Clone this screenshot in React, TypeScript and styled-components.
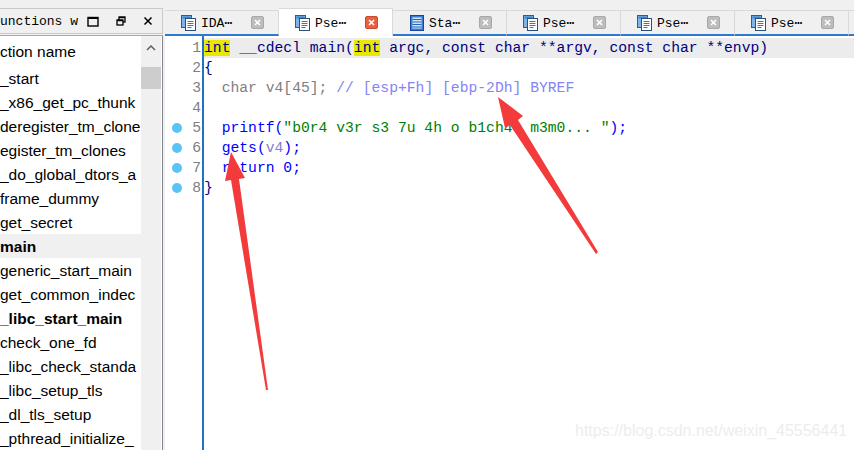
import React from 'react';
import styled, { createGlobalStyle } from 'styled-components';

const GlobalStyle = createGlobalStyle`
  html, body {
    margin: 0;
    padding: 0;
    background: #f0f0f0;
    overflow: hidden;
  }
  #root {
    width: 854px;
    height: 450px;
  }
`;

const Root = styled.div`
  position: relative;
  display: flex;
  width: 854px;
  height: 450px;
  background: #f0f0f0;
  overflow: hidden;
`;

const LeftPanel = styled.div`
  width: 163px;
  display: flex;
  flex-direction: column;
  padding-top: 8px;
  box-sizing: border-box;
`;

const TitleBar = styled.div`
  height: 27px;
  display: flex;
  align-items: center;
  border: 1px solid #c9c9c9;
  border-left: none;
  box-sizing: border-box;
  font: 13px 'Liberation Mono', monospace;
  color: #000;
`;

const TitleText = styled.div`
  width: 80px;
  white-space: nowrap;
  overflow: hidden;
`;

const TitleIcon = styled.div`
  width: 28px;
  display: flex;
  justify-content: center;
  align-items: center;
`;

const ListPanel = styled.div`
  flex: 1;
  display: flex;
  margin-top: 1px;
  border-top: 1px solid #a8a8a8;
  border-right: 1px solid #828790;
  background: #fff;
`;

const List = styled.div`
  width: 141px;
  overflow: hidden;
  font: 15.5px 'Liberation Sans', Arial, sans-serif;
  color: #000;
`;

const HeaderRow = styled.div`
  height: 30px;
  line-height: 31px;
  white-space: nowrap;
`;

const Row = styled.div<{ $bold?: boolean; $sel?: boolean }>`
  height: 24px;
  line-height: 25px;
  white-space: nowrap;
  font-weight: ${(p) => (p.$bold ? 700 : 400)};
  background: ${(p) => (p.$sel ? '#f0f0f0' : 'transparent')};
`;

const Scrollbar = styled.div`
  width: 20px;
  background: #f0f0f0;
  display: flex;
  flex-direction: column;
`;

const ScrollArrow = styled.div`
  height: 24px;
  display: flex;
  align-items: center;
  justify-content: center;
`;

const Thumb = styled.div`
  margin-top: 7px;
  height: 22px;
  background: #cdcdcd;
`;

const RightPanel = styled.div`
  flex: 1;
  margin-left: 2px;
  display: flex;
  flex-direction: column;
  padding-top: 8px;
  min-width: 0;
`;

const TabStrip = styled.div`
  height: 28px;
  display: flex;
  align-items: flex-end;
`;

const Tab = styled.div<{ $active?: boolean }>`
  flex: 0 0 114px;
  height: ${(p) => (p.$active ? '28px' : '26px')};
  box-sizing: border-box;
  display: flex;
  align-items: center;
  padding-left: 16px;
  gap: 4px;
  background: ${(p) => (p.$active ? '#fff' : '#f0f0f0')};
  border: 1px solid #d9d9d9;
  border-left: none;
  border-bottom: ${(p) => (p.$active ? 'none' : '2px solid #2b7ad0')};
  font: 13px 'Liberation Mono', 'DejaVu Sans Mono', monospace;
  color: #000;
`;

const TabLabel = styled.span`
  width: 46px;
  white-space: nowrap;
`;

const CloseBtn = styled.div<{ $active?: boolean }>`
  width: 13px;
  height: 13px;
  border-radius: 2px;
  box-sizing: border-box;
  border: 1px solid ${(p) => (p.$active ? '#c84a30' : '#a8a8a8')};
  background: ${(p) => (p.$active ? '#e8603f' : '#bdbdbd')};
  display: flex;
  align-items: center;
  justify-content: center;
`;

const Editor = styled.div`
  flex: 1;
  display: flex;
  background: #fff;
  font: 14.7px 'Liberation Mono', monospace;
`;

const Gutter = styled.div`
  width: 37px;
  padding-top: 2px;
  display: flex;
  flex-direction: column;
`;

const GutterLine = styled.div`
  height: 20px;
  display: grid;
  grid-template-columns: 24px 1fr;
  align-items: center;
  color: #808080;
`;

const Dot = styled.div`
  justify-self: center;
  width: 10px;
  height: 10px;
  border-radius: 50%;
  background: #5ac4f6;
`;

const LineNo = styled.span`
  text-align: right;
  padding-right: 1px;
`;

const Code = styled.div`
  flex: 1;
  padding-top: 2px;
  border-left: 2px solid #1f72c6;
`;

const CodeLine = styled.div<{ $current?: boolean }>`
  height: 20px;
  line-height: 20px;
  white-space: pre;
  color: #000080;
  background: ${(p) => (p.$current ? '#ececec' : 'transparent')};
`;

const Tok = styled.span<{ $c?: string; $hl?: boolean }>`
  color: ${(p) => p.$c || 'inherit'};
  background: ${(p) => (p.$hl ? '#e8e800' : 'transparent')};
`;

const Overlay = styled.svg`
  position: absolute;
  left: 0;
  top: 0;
  pointer-events: none;
`;

const Watermark = styled.div`
  position: absolute;
  left: 575px;
  top: 422px;
  font: 16px 'Liberation Sans', Arial, sans-serif;
  color: #ededed;
  white-space: nowrap;
`;

const names: { n: string; b?: boolean; s?: boolean }[] = [
  { n: '_start' },
  { n: '_x86_get_pc_thunk' },
  { n: 'deregister_tm_clone' },
  { n: 'egister_tm_clones' },
  { n: '_do_global_dtors_a' },
  { n: 'frame_dummy' },
  { n: 'get_secret' },
  { n: 'main', b: true, s: true },
  { n: 'generic_start_main' },
  { n: 'get_common_indec' },
  { n: '_libc_start_main', b: true },
  { n: 'check_one_fd' },
  { n: '_libc_check_standa' },
  { n: '_libc_setup_tls' },
  { n: '_dl_tls_setup' },
  { n: '_pthread_initialize_' },
];

const tabs = [
  { label: 'IDA', kind: 'doc' },
  { label: 'Pse', kind: 'doc', active: true },
  { label: 'Sta', kind: 'list' },
  { label: 'Pse', kind: 'doc' },
  { label: 'Pse', kind: 'doc' },
  { label: 'Pse', kind: 'doc' },
];

const DocIcon = () => (
  <svg width="16" height="16" viewBox="0 0 16 16">
    <rect x="0.5" y="0.5" width="10" height="12" fill="#7fb4ea" stroke="#1b5fb0" />
    <rect x="1.5" y="1.5" width="8" height="2" fill="#3b86d8" />
    <rect x="4.5" y="3.5" width="10" height="12" fill="#fff" stroke="#2a4f7a" />
    <path d="M6.5 6.5h6M6.5 8.5h6M6.5 10.5h6M6.5 12.5h4" stroke="#5a6f86" />
  </svg>
);

const ListIcon = () => (
  <svg width="16" height="16" viewBox="0 0 16 16">
    <rect x="1.5" y="0.5" width="13" height="15" fill="#3a7fd5" stroke="#17479a" />
    <rect x="3.5" y="2.5" width="9" height="11" fill="#cfe3fb" />
    <path d="M3.5 4.5h9M3.5 7h9M3.5 9.5h9M3.5 12h9" stroke="#2a63b8" />
  </svg>
);

const CloseX = () => (
  <svg width="7" height="7" viewBox="0 0 7 7">
    <path d="M1 1l5 5M6 1l-5 5" stroke="#fff" strokeWidth="1.6" />
  </svg>
);

const App: React.FC = () => {
  return (
    <>
      <GlobalStyle />
      <Root>
        <LeftPanel>
          <TitleBar>
            <TitleText>unctions w</TitleText>
            <TitleIcon>
              <svg width="12" height="11" viewBox="0 0 12 11">
                <rect x="1" y="1.5" width="10" height="8.5" fill="none" stroke="#000" strokeWidth="1.4" />
                <path d="M1 2h10" stroke="#000" strokeWidth="2" />
              </svg>
            </TitleIcon>
            <TitleIcon>
              <svg width="10" height="10" viewBox="0 0 10 10">
                <rect x="3" y="1" width="6" height="5" fill="none" stroke="#000" strokeWidth="1.3" />
                <rect x="1" y="4" width="6" height="5" fill="#f0f0f0" stroke="#000" strokeWidth="1.3" />
                <path d="M1 4.5h6M3 1.5h6" stroke="#000" strokeWidth="1.6" />
              </svg>
            </TitleIcon>
            <TitleIcon>
              <svg width="10" height="10" viewBox="0 0 10 10">
                <path d="M1.5 1.5l7 7M8.5 1.5l-7 7" stroke="#000" strokeWidth="1.5" />
              </svg>
            </TitleIcon>
          </TitleBar>
          <ListPanel>
            <List>
              <HeaderRow>ction name</HeaderRow>
              {names.map((r, i) => (
                <Row key={i} $bold={r.b} $sel={r.s}>
                  {r.n}
                </Row>
              ))}
            </List>
            <Scrollbar>
              <ScrollArrow>
                <svg width="10" height="6" viewBox="0 0 10 6">
                  <path d="M1 5l4-4 4 4" fill="none" stroke="#606060" strokeWidth="1.5" />
                </svg>
              </ScrollArrow>
              <Thumb />
            </Scrollbar>
          </ListPanel>
        </LeftPanel>

        <RightPanel>
          <TabStrip>
            {tabs.map((t, i) => (
              <Tab key={i} $active={t.active}>
                {t.kind === 'doc' ? <DocIcon /> : <ListIcon />}
                <TabLabel>{t.label}⋯</TabLabel>
                <CloseBtn $active={t.active}>
                  <CloseX />
                </CloseBtn>
              </Tab>
            ))}
            <Tab />
          </TabStrip>
          <Editor>
            <Gutter>
              {[1, 2, 3, 4, 5, 6, 7, 8].map((n) => (
                <GutterLine key={n}>
                  {n >= 5 ? <Dot /> : <span />}
                  <LineNo>{n}</LineNo>
                </GutterLine>
              ))}
            </Gutter>
            <Code>
              <CodeLine $current>
                <Tok $hl>int</Tok> __cdecl main(<Tok $hl>int</Tok> argc, const char **argv, const char **envp)
              </CodeLine>
              <CodeLine>{'{'}</CodeLine>
              <CodeLine>
                {'  '}
                <Tok $c="#808080">char v4[45];</Tok> <Tok $c="#8484f4">// [esp+Fh] [ebp-2Dh] BYREF</Tok>
              </CodeLine>
              <CodeLine />
              <CodeLine>
                {'  '}
                <Tok $c="#0000ff">printf(</Tok>
                <Tok $c="#008000">"b0r4 v3r s3 7u 4h o b1ch4o m3m0... "</Tok>
                <Tok $c="#0000ff">);</Tok>
              </CodeLine>
              <CodeLine>
                {'  '}
                <Tok $c="#0000ff">gets(</Tok>
                <Tok $c="#7f7fcf">v4</Tok>
                <Tok $c="#0000ff">);</Tok>
              </CodeLine>
              <CodeLine>
                {'  '}
                <Tok $c="#0000ff">return 0;</Tok>
              </CodeLine>
              <CodeLine>{'}'}</CodeLine>
            </Code>
          </Editor>
        </RightPanel>

        <Watermark>https://blog.csdn.net/weixin_45556441</Watermark>
        <Overlay width="854" height="450" viewBox="0 0 854 450">
          <polygon
            points="231,152 245,178 239,179 268,390 266,390 231,180 225,181"
            fill="#f43b3b"
          />
          <polygon
            points="498,97 523,116 518,120 598,252 596,254 510,125 505,128"
            fill="#f43b3b"
          />
        </Overlay>
      </Root>
    </>
  );
};

export default App;
